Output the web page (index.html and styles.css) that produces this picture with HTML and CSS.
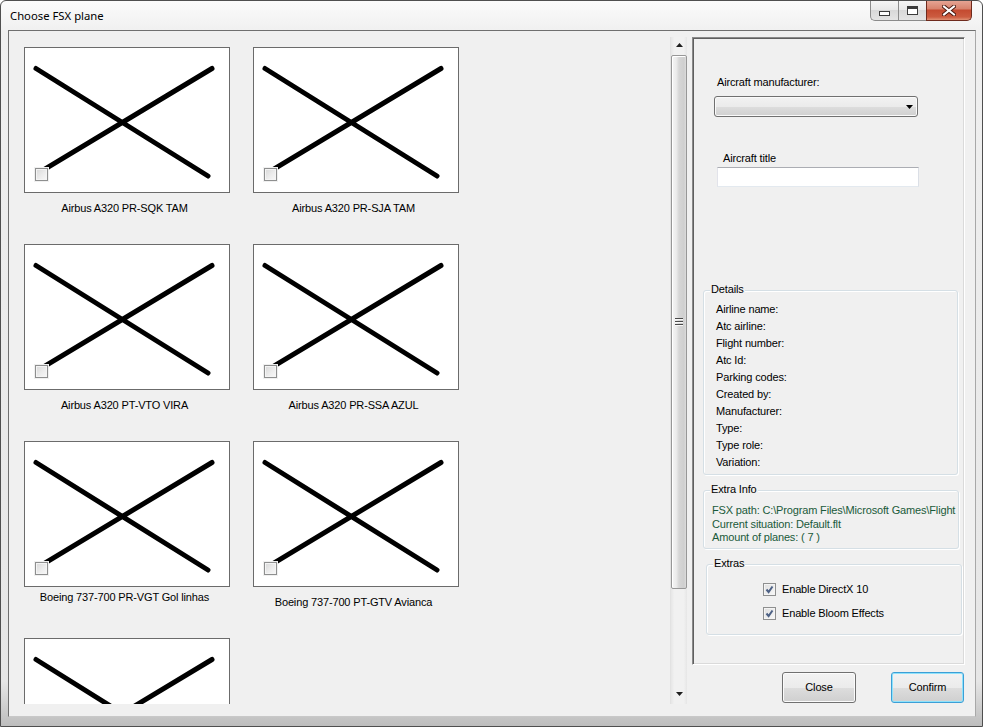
FILE: index.html
```html
<!DOCTYPE html>
<html lang="en">
<head>
<meta charset="utf-8">
<title>Choose FSX plane</title>
<link rel="stylesheet" href="styles.css">
</head>
<body>
<div class="window">
  <div class="titlebar">
    <span class="title">Choose FSX plane</span>
    <div class="controls">
      <div class="ctl min"><span class="min-glyph"></span></div>
      <div class="ctl max"><span class="max-glyph"></span></div>
      <div class="ctl close">
        <svg width="14" height="11" viewBox="0 0 14 11"><path d="M2 1.5 L12 9.5 M12 1.5 L2 9.5" stroke="#4a1a10" stroke-width="4" stroke-linecap="square"/><path d="M2 1.5 L12 9.5 M12 1.5 L2 9.5" stroke="#ffffff" stroke-width="2" stroke-linecap="square"/></svg>
      </div>
    </div>
  </div>
  <div class="client">
    <div class="gallery">
      <div class="cards">
        <div class="card">
          <div class="pic"><svg class="xmark" viewBox="0 0 204 144" width="204" height="144"><path d="M11 20.5 L183 128 M187 20.5 L14 124.6" stroke="#000" stroke-width="5" stroke-linecap="round"/></svg><span class="pick"><span class="pick-box"></span></span></div>
          <div class="cap">Airbus A320 PR-SQK TAM</div>
        </div>
        <div class="card">
          <div class="pic"><svg class="xmark" viewBox="0 0 204 144" width="204" height="144"><path d="M11 20.5 L183 128 M187 20.5 L14 124.6" stroke="#000" stroke-width="5" stroke-linecap="round"/></svg><span class="pick"><span class="pick-box"></span></span></div>
          <div class="cap">Airbus A320 PR-SJA TAM</div>
        </div>
        <div class="card">
          <div class="pic"><svg class="xmark" viewBox="0 0 204 144" width="204" height="144"><path d="M11 20.5 L183 128 M187 20.5 L14 124.6" stroke="#000" stroke-width="5" stroke-linecap="round"/></svg><span class="pick"><span class="pick-box"></span></span></div>
          <div class="cap">Airbus A320 PT-VTO VIRA</div>
        </div>
        <div class="card">
          <div class="pic"><svg class="xmark" viewBox="0 0 204 144" width="204" height="144"><path d="M11 20.5 L183 128 M187 20.5 L14 124.6" stroke="#000" stroke-width="5" stroke-linecap="round"/></svg><span class="pick"><span class="pick-box"></span></span></div>
          <div class="cap">Airbus A320 PR-SSA AZUL</div>
        </div>
        <div class="card">
          <div class="pic"><svg class="xmark" viewBox="0 0 204 144" width="204" height="144"><path d="M11 20.5 L183 128 M187 20.5 L14 124.6" stroke="#000" stroke-width="5" stroke-linecap="round"/></svg><span class="pick"><span class="pick-box"></span></span></div>
          <div class="cap cap-wrapped">Boeing 737-700 PR-VGT Gol linhas</div>
        </div>
        <div class="card">
          <div class="pic"><svg class="xmark" viewBox="0 0 204 144" width="204" height="144"><path d="M11 20.5 L183 128 M187 20.5 L14 124.6" stroke="#000" stroke-width="5" stroke-linecap="round"/></svg><span class="pick"><span class="pick-box"></span></span></div>
          <div class="cap">Boeing 737-700 PT-GTV Avianca</div>
        </div>
        <div class="card">
          <div class="pic"><svg class="xmark" viewBox="0 0 204 144" width="204" height="144"><path d="M11 20.5 L183 128 M187 20.5 L14 124.6" stroke="#000" stroke-width="5" stroke-linecap="round"/></svg><span class="pick"><span class="pick-box"></span></span></div>
          <div class="cap"></div>
        </div>
      </div>
      <div class="vscroll">
        <div class="sb-btn sb-up"><svg width="7" height="4" viewBox="0 0 7 4"><path d="M3.5 0 L7 4 L0 4 Z" fill="#1e1e1e"/></svg></div>
        <div class="sb-track">
          <div class="thumb"><span class="grip"></span><span class="grip"></span><span class="grip"></span></div>
        </div>
        <div class="sb-btn sb-down"><svg width="7" height="4" viewBox="0 0 7 4"><path d="M0 0 L7 0 L3.5 4 Z" fill="#1e1e1e"/></svg></div>
      </div>
    </div>
    <div class="side">
      <div class="panel">
        <div class="lbl lbl-manu">Aircraft manufacturer:</div>
        <div class="combo"><svg width="7" height="4" viewBox="0 0 7 4"><path d="M0 0 L7 0 L3.5 4 Z" fill="#000"/></svg></div>
        <div class="lbl lbl-title">Aircraft title</div>
        <div class="textbox"></div>

        <div class="group group-details">
          <div class="group-title">Details</div>
          <div class="detail-list">
            <div>Airline name:</div>
            <div>Atc airline:</div>
            <div>Flight number:</div>
            <div>Atc Id:</div>
            <div>Parking codes:</div>
            <div>Created by:</div>
            <div>Manufacturer:</div>
            <div>Type:</div>
            <div>Type role:</div>
            <div>Variation:</div>
          </div>
        </div>

        <div class="group group-extra">
          <div class="group-title">Extra Info</div>
          <div class="extra-list">
            <div>FSX path: C:\Program Files\Microsoft Games\Flight Simulator X</div>
            <div>Current situation: Default.flt</div>
            <div>Amount of planes: ( 7 )</div>
          </div>
        </div>

        <div class="group group-extras">
          <div class="group-title">Extras</div>
          <div class="opt opt-first"><span class="chk"><svg width="9" height="9" viewBox="0 0 9 9"><path d="M1.5 4.5 L3.6 7 L7.5 1.5" fill="none" stroke="#4d6185" stroke-width="2"/></svg></span><span>Enable DirectX 10</span></div>
          <div class="opt"><span class="chk"><svg width="9" height="9" viewBox="0 0 9 9"><path d="M1.5 4.5 L3.6 7 L7.5 1.5" fill="none" stroke="#4d6185" stroke-width="2"/></svg></span><span>Enable Bloom Effects</span></div>
        </div>
      </div>
      <div class="buttons">
        <div class="btn btn-close">Close</div>
        <div class="btn btn-confirm">Confirm</div>
      </div>
    </div>
  </div>
</div>
</body>
</html>
```

FILE: styles.css
```css
* { box-sizing: border-box; }

html, body {
  margin: 0;
  padding: 0;
  background: #ffffff;
}

body {
  width: 983px;
  height: 727px;
  overflow: hidden;
  font-family: "Liberation Sans", Arial, sans-serif;
  font-size: 11px;
  letter-spacing: -0.15px;
  color: #000;
}

.window {
  width: 983px;
  height: 727px;
  border: 1px solid #4f4f4f;
  border-radius: 6px 6px 0 0;
  background: linear-gradient(to bottom, #fbfbfb 0%, #f0f0f0 30px, #e6e6e6 680px, #bdbdbd 100%);
  display: flex;
  flex-direction: column;
  overflow: hidden;
}

/* ---------- title bar ---------- */
.titlebar {
  height: 29px;
  display: flex;
  align-items: flex-start;
  flex-shrink: 0;
}

.title {
  font-family: "Noto Sans", "Open Sans", sans-serif;
  font-size: 11.3px;
  letter-spacing: 0;
  line-height: 16px;
  margin: 7px 0 0 9px;
  color: #000;
}

.controls {
  margin: -1px 10px 0 auto;
  display: flex;
  height: 21px;
}

.ctl {
  height: 21px;
  display: flex;
  align-items: center;
  justify-content: center;
  border: 1px solid #8b8b8b;
  border-top: none;
}

.min {
  width: 28px;
  border-right: none;
  border-radius: 0 0 0 5px;
  background: linear-gradient(to bottom, #f7f7f7 0%, #e8e8e8 50%, #d8d8d8 51%, #e4e4e4 100%);
}

.max {
  width: 28px;
  border-right: none;
  background: linear-gradient(to bottom, #f7f7f7 0%, #e8e8e8 50%, #d8d8d8 51%, #e4e4e4 100%);
}

.close {
  width: 46px;
  border-color: #6e2a1d;
  border-radius: 0 0 5px 0;
  background: linear-gradient(to bottom, #e7a898 0%, #d7826c 45%, #c44a30 50%, #cc5c40 85%, #e09275 100%);
}

.min-glyph {
  display: block;
  width: 11px;
  height: 5px;
  margin-top: 7px;
  border: 1px solid #3b3b3b;
  background: #ffffff;
}

.max-glyph {
  display: block;
  width: 11px;
  height: 9px;
  border: 1px solid #3b3b3b;
  border-top-width: 3px;
  background: #ffffff;
  box-shadow: inset 0 0 0 1px #ffffff;
}

/* ---------- client ---------- */
.client {
  margin-left: 7px;
  width: 968px;
  height: 687px;
  border: 1px solid #6f6f6f;
  border-right-color: #a8a8a8;
  border-bottom-color: #c8c8c8;
  background: #f0f0f0;
  display: flex;
  align-items: flex-start;
}

/* ---------- gallery ---------- */
.gallery {
  margin: 6px 0 0 5px;
  width: 673px;
  height: 667px;
  display: flex;
}

.cards {
  width: 656px;
  height: 667px;
  overflow: hidden;
  padding: 10px 0 0 10px;
  display: grid;
  grid-template-columns: 206px 206px;
  grid-auto-rows: 197px;
  column-gap: 23px;
  align-content: start;
}

.card {
  display: flex;
  flex-direction: column;
  align-items: center;
}

.pic {
  position: relative;
  width: 206px;
  height: 146px;
  border: 1px solid #6b6b6b;
  background: #ffffff;
  flex-shrink: 0;
}

.xmark {
  display: block;
}

.pick {
  position: absolute;
  left: 9px;
  top: 119px;
  width: 15px;
  height: 15px;
  background: #f0f0f0;
  padding: 1px;
}

.pick-box {
  display: block;
  width: 13px;
  height: 13px;
  border: 1px solid #8e8f8f;
  background: linear-gradient(135deg, #d8d8d8 0%, #ececec 55%, #f8f8f8 100%);
  box-shadow: inset 0 0 0 1px #f4f4f4;
}

.cap {
  margin: 9px 5px 0 0;
  width: 229px;
  text-align: center;
  line-height: 13px;
  white-space: nowrap;
  color: #000;
}

.cap-wrapped {
  margin-top: 4px;
}

/* ---------- scrollbar ---------- */
.vscroll {
  width: 17px;
  height: 667px;
  display: flex;
  flex-direction: column;
  background: linear-gradient(to right, #e6e6e6 0%, #f1f1f1 20%, #f1f1f1 80%, #e6e6e6 100%);
  border-left: 1px solid #e2e2e2;
}

.sb-btn {
  height: 17px;
  display: flex;
  justify-content: center;
  flex-shrink: 0;
}

.sb-up {
  align-items: flex-start;
  padding-top: 6px;
}

.sb-down {
  align-items: flex-end;
  padding-bottom: 8px;
}

.sb-track {
  flex: 1;
  padding-top: 1px;
}

.thumb {
  width: 16px;
  height: 534px;
  border: 1px solid #979797;
  border-radius: 2px;
  background: linear-gradient(to right, #f5f5f5 0%, #ececec 30%, #d6d6d6 50%, #cfcfcf 85%, #dcdcdc 100%);
  box-shadow: inset 1px 1px 0 #ffffff;
  display: flex;
  flex-direction: column;
  align-items: center;
  justify-content: center;
  gap: 1px;
}

.grip {
  display: block;
  width: 8px;
  height: 2px;
  border-top: 1px solid #4a4a4a;
  border-bottom: 1px solid #f8f8f8;
}

/* ---------- side panel ---------- */
.side {
  margin: 6px 0 0 5px;
  width: 273px;
  display: flex;
  flex-direction: column;
}

.panel {
  height: 628px;
  border: 1px solid;
  border-color: #8a8a8a #ffffff #ffffff #8a8a8a;
  box-shadow: inset 1px 1px 0 #5f5f5f, inset -1px -1px 0 #dadada;
  display: flex;
  flex-direction: column;
  align-items: flex-start;
}

.lbl {
  line-height: 13px;
  white-space: nowrap;
}

.lbl-manu {
  margin: 38px 0 0 24px;
}

.combo {
  margin: 7px 0 0 21px;
  width: 204px;
  height: 21px;
  border: 1px solid #707070;
  border-radius: 3px;
  background: linear-gradient(to bottom, #f2f2f2 0%, #ebebeb 50%, #dddddd 51%, #d0d0d0 100%);
  box-shadow: inset 0 0 0 1px #fafafa;
  display: flex;
  align-items: center;
  justify-content: flex-end;
  padding-right: 4px;
}

.lbl-title {
  margin: 35px 0 0 30px;
}

.textbox {
  margin: 2px 0 0 24px;
  width: 202px;
  height: 20px;
  background: #ffffff;
  border: 1px solid;
  border-color: #abadb3 #dbdfe6 #e3e9ef #e2e3ea;
}

.group {
  border: 1px solid #d5dfe5;
  border-radius: 3px;
  box-shadow: inset 1px 1px 0 #ffffff, 1px 1px 0 #ffffff;
  flex-shrink: 0;
}

.group-title {
  display: block;
  width: max-content;
  margin: -8px 0 0 6px;
  padding: 0 1px;
  line-height: 13px;
  background: #f0f0f0;
}

.group-details {
  margin: 103px 0 0 10px;
  width: 255px;
  height: 185px;
}

.detail-list {
  margin-top: 5px;
  padding-left: 12px;
  line-height: 17px;
}

.group-extra {
  margin: 15px 0 0 10px;
  width: 256px;
  height: 59px;
}

.extra-list {
  margin-top: 8px;
  padding-left: 8px;
  line-height: 13.5px;
  color: #1a5a3a;
  white-space: nowrap;
  overflow: hidden;
  width: 254px;
}

.group-extras {
  margin: 15px 0 0 13px;
  width: 256px;
  height: 71px;
}

.opt {
  display: flex;
  align-items: center;
  gap: 6px;
  padding-left: 56px;
  height: 13px;
  line-height: 13px;
  margin-top: 11px;
}

.opt-first {
  margin-top: 13px;
}

.chk {
  width: 13px;
  height: 13px;
  border: 1px solid #8e8f8f;
  background: linear-gradient(135deg, #dedede 0%, #eeeeee 60%, #f8f8f8 100%);
  box-shadow: inset 0 0 0 1px #f4f4f4;
  display: flex;
  align-items: center;
  justify-content: center;
  flex-shrink: 0;
}

.chk svg {
  display: block;
}

/* ---------- buttons ---------- */
.buttons {
  margin-top: 7px;
  display: flex;
  gap: 35px;
  padding-left: 90px;
}

.btn {
  height: 31px;
  display: flex;
  align-items: center;
  justify-content: center;
  border: 1px solid #707070;
  border-radius: 3px;
  background: linear-gradient(to bottom, #f2f2f2 0%, #ebebeb 50%, #dddddd 51%, #cfcfcf 100%);
  box-shadow: inset 0 0 0 1px #fbfbfb;
  line-height: 13px;
}

.btn-close {
  width: 74px;
}

.btn-confirm {
  width: 73px;
  border-color: #3c9fd6;
  box-shadow: inset 0 0 0 1px #8fe2fb;
}
```
